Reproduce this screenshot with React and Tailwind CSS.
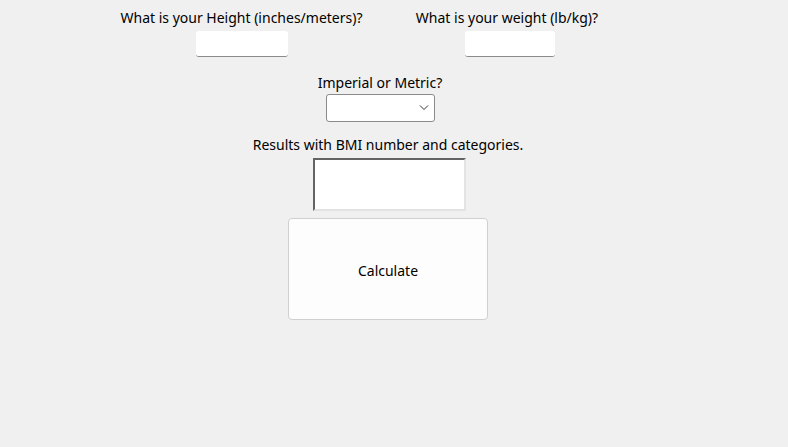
import React from "react";

export default function App() {
  const font = { fontFamily: '"Noto Sans", "Open Sans", sans-serif' };
  return (
    <div className="w-[788px] h-[447px] bg-[#f0f0f0] text-[#000] text-[14px] leading-[19px] overflow-hidden" style={font}>
      <div className="flex pt-[8px]">
        <div className="ml-[120px] w-[243px] flex flex-col items-center">
          <span className="whitespace-nowrap">What is your Height (inches/meters)?</span>
          <input className="mt-[4px] w-[92px] h-[26px] bg-white border-b border-[#8a8a8a] rounded-[3px] outline-none" />
        </div>
        <div className="ml-[51px] w-[186px] flex flex-col items-center">
          <span className="whitespace-nowrap">What is your weight (lb/kg)?</span>
          <input className="mt-[4px] ml-[6px] w-[90px] h-[26px] bg-white border-b border-[#8a8a8a] rounded-[3px] outline-none" />
        </div>
      </div>

      <div className="ml-[317px] w-[126px] mt-[16px] flex flex-col items-center">
        <span className="whitespace-nowrap">Imperial or Metric?</span>
        <div className="mt-[2px] w-[109px] h-[28px] bg-white border border-[#8a8a8a] rounded-[3px] flex items-center justify-end pr-[5px]">
          <svg width="10" height="6" viewBox="0 0 10 6" fill="none" stroke="#333" strokeWidth="1">
            <path d="M1 0.5 L5 4.5 L9 0.5" />
          </svg>
        </div>
      </div>

      <div className="ml-[254px] w-[268px] mt-[13px] flex flex-col items-center">
        <span className="whitespace-nowrap">Results with BMI number and categories.</span>
        <div className="mt-[4px] ml-[3px] w-[153px] h-[53px] bg-white border-2 border-t-[#646464] border-l-[#646464] border-b-[#e3e3e3] border-r-[#e3e3e3]" />
      </div>

      <button className="ml-[288px] mt-[7px] w-[200px] h-[102px] bg-[#fdfdfd] border border-[#d0d0d0] rounded-[4px] flex items-center justify-center pt-[2px]">
        Calculate
      </button>
    </div>
  );
}
